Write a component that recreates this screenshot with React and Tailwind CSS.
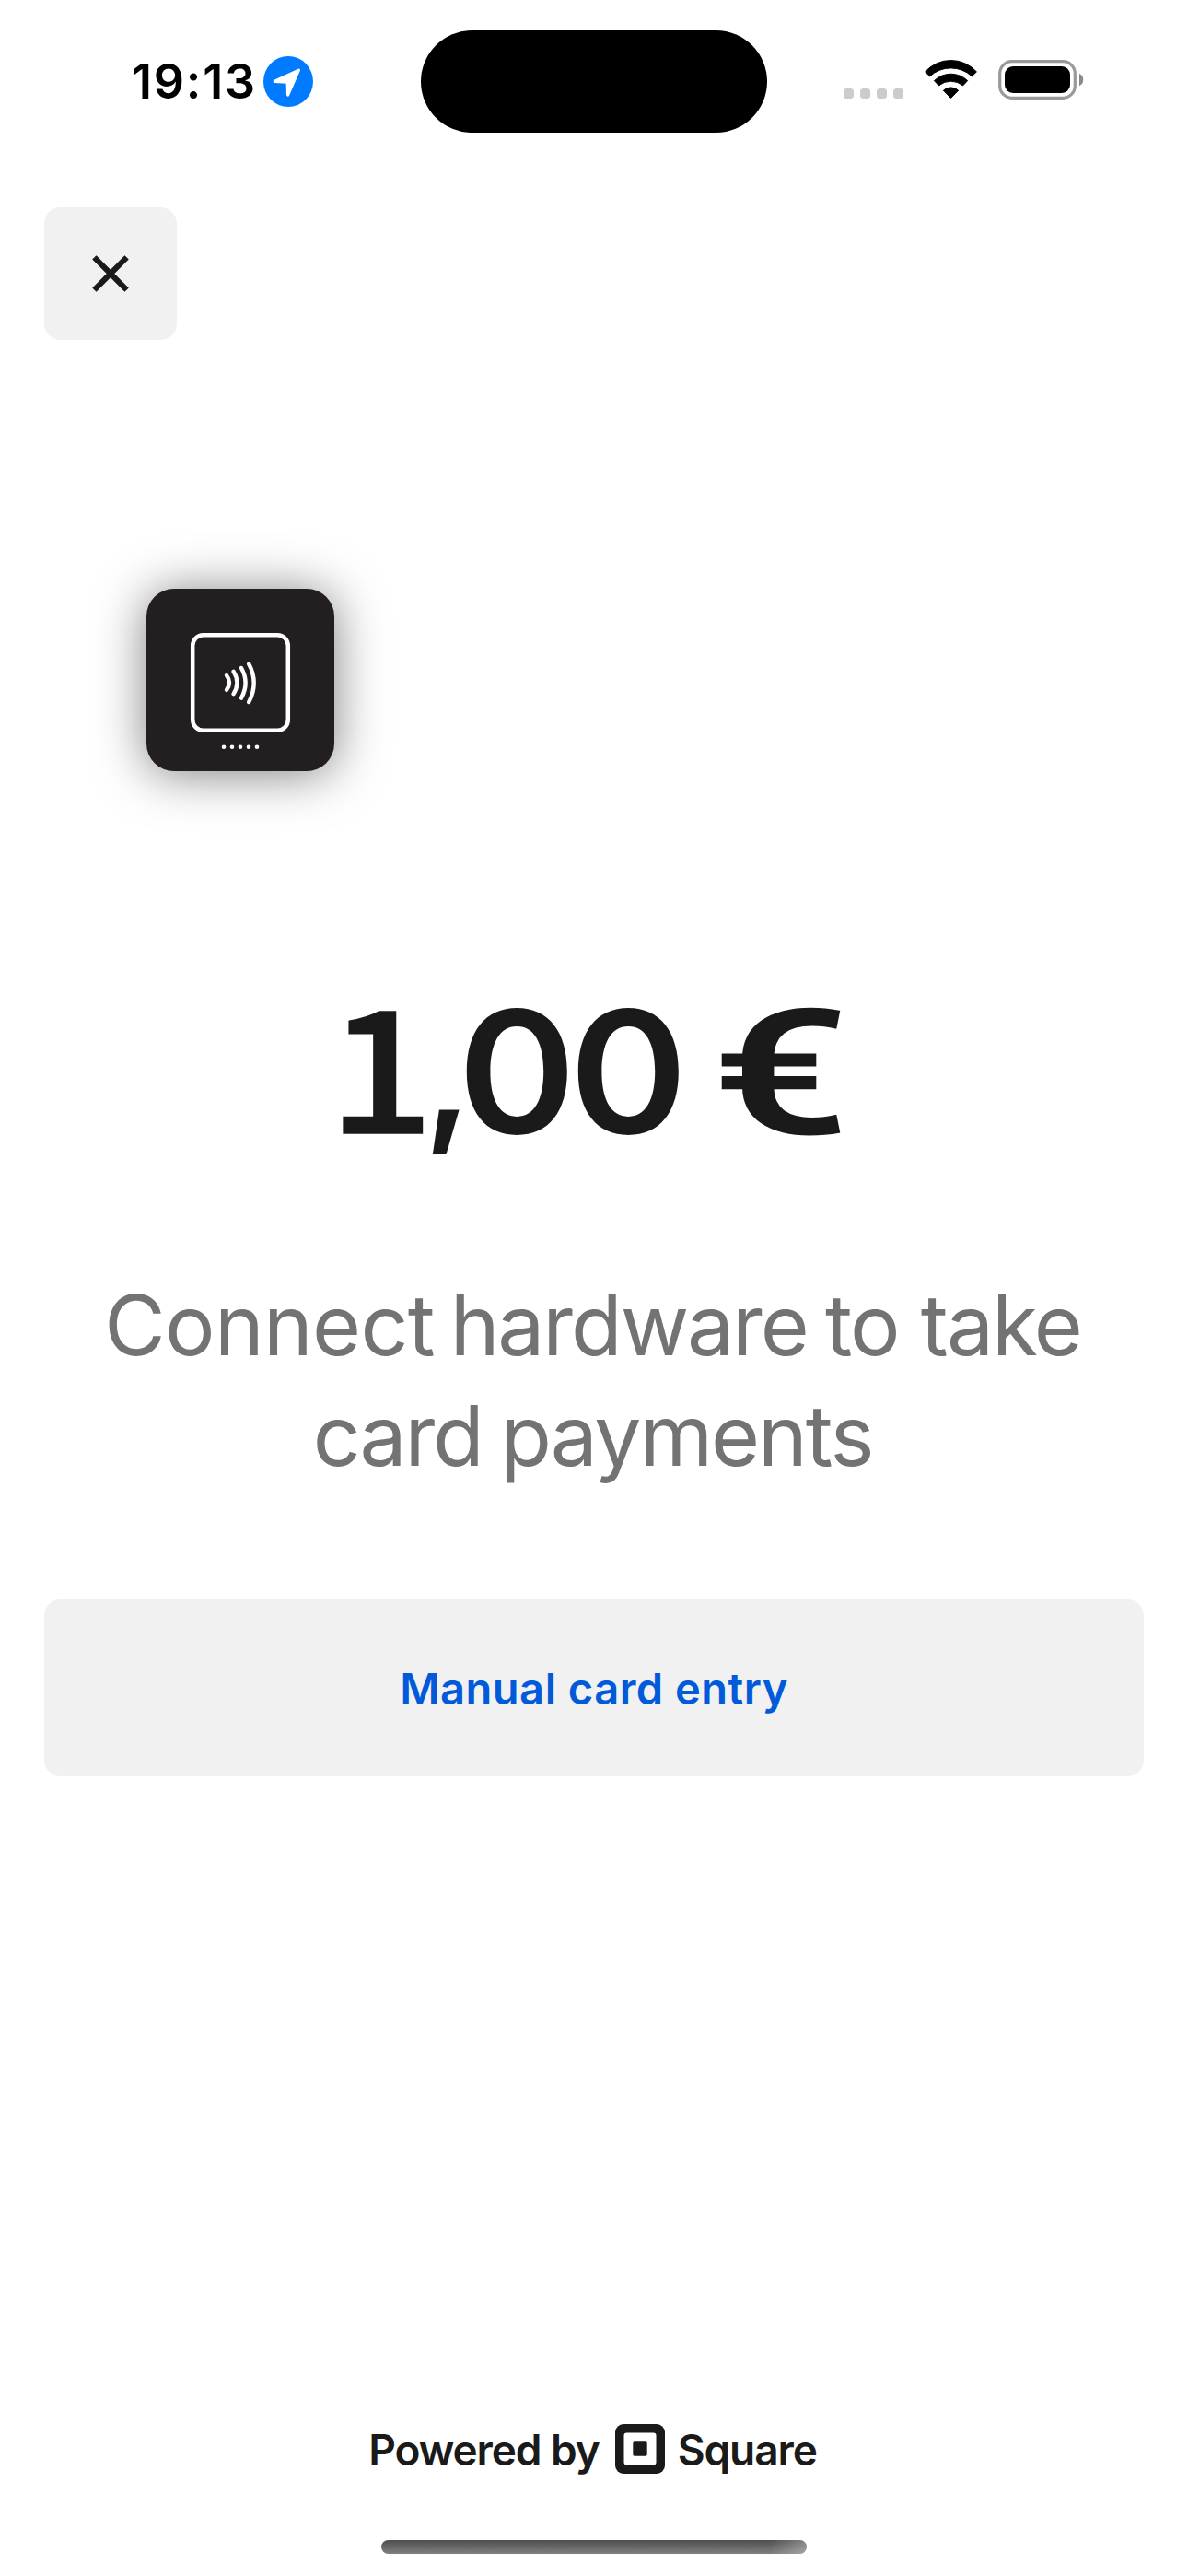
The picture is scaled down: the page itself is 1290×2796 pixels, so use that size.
import React from "react";

function LocationBadge() {
  return (
    <svg className="mt-[61px] ml-[6px] h-[55px] w-[54px] shrink-0" viewBox="0 0 54 55">
      <ellipse cx="27" cy="27.5" rx="27" ry="27.5" fill="#007aff" />
      <path
        d="M12.2 27.3 L38.4 15.2 L26.6 42 L26.2 28.2 Z"
        fill="#fff"
        stroke="#fff"
        strokeWidth="3.2"
        strokeLinejoin="round"
      />
    </svg>
  );
}

function SignalDots() {
  return (
    <div className="mt-[96px] ml-[83px] flex gap-[7px]">
      <span className="size-[11px] rounded-[3.5px] bg-[#cccccc]" />
      <span className="size-[11px] rounded-[3.5px] bg-[#cccccc]" />
      <span className="size-[11px] rounded-[3.5px] bg-[#cccccc]" />
      <span className="size-[11px] rounded-[3.5px] bg-[#cccccc]" />
    </div>
  );
}

function WifiIcon() {
  return (
    <svg className="mt-[65px] ml-[22px] h-[43px] w-[59px] shrink-0" viewBox="1003 65 59 43">
      <g stroke="#000" strokeWidth="1" strokeLinejoin="round">
        <path d="M1004.6 77.9 A37.6 37.6 0 0 1 1060.4 77.9 L1055.4 82.8 A33.9 33.9 0 0 0 1009.6 82.8 Z" />
        <path d="M1014.4 87.6 A25.9 25.9 0 0 1 1050.6 87.6 L1045.6 92.9 A20.6 20.6 0 0 0 1019.4 92.9 Z" />
        <path d="M1024.4 98.2 A11.6 11.6 0 0 1 1040.6 98.2 L1032.5 106.4 Z" />
      </g>
    </svg>
  );
}

function BatteryIcon() {
  return (
    <svg className="mt-[65px] ml-[22px] h-[43px] w-[94px] shrink-0" viewBox="0 0 94 43">
      <rect x="1.7" y="1.7" width="81.6" height="39.6" rx="13" fill="none" stroke="#999" strokeWidth="3.2" />
      <rect x="7" y="7" width="71" height="29" rx="9" />
      <path d="M88 14.8 A7.4 7.4 0 0 1 88 28.2 Z" fill="#8a8a8a" />
    </svg>
  );
}

function StatusBar() {
  return (
    <header className="flex h-[225px] items-start">
      <div className="flex w-[457px] items-start pl-[143px]">
        <span className="mt-[59px] w-[137px] text-[52px] leading-[60px] font-semibold tracking-[1.8px] whitespace-nowrap text-black">
          19:13
        </span>
        <LocationBadge />
      </div>
      <div className="mt-[33px] h-[111px] w-[376px] rounded-full bg-black" />
      <div className="flex flex-1 items-start">
        <SignalDots />
        <WifiIcon />
        <BatteryIcon />
      </div>
    </header>
  );
}

function CloseButton() {
  return (
    <button aria-label="Close" className="ml-[48px] flex size-[144px] items-center justify-center rounded-[18px] bg-[#f1f1f1]">
      <svg className="size-[40px]" viewBox="0 0 40 40" stroke="#1a1a1a" strokeWidth="6.2">
        <path d="M2.4 2.4 L37.6 37.6 M37.6 2.4 L2.4 37.6" />
      </svg>
    </button>
  );
}

function CardReader() {
  return (
    <div className="mt-[270px] ml-[159px] h-[198px] w-[204px] rounded-[30px] bg-[#231f20] shadow-[0_3px_54px_rgba(0,0,0,0.5)]">
      <svg className="h-[198px] w-[204px]" viewBox="159 639 204 198" fill="none" stroke="#fff">
        <rect x="209.2" y="689.2" width="103.6" height="103.6" rx="11.5" strokeWidth="4.5" />
        <g strokeWidth="4.4" strokeLinecap="round">
          <path d="M246 733 Q252 741 246 748.8" />
          <path d="M253.6 728.8 Q261.2 741 253.6 753.2" />
          <path d="M262 725 Q271.2 741 262 757.6" />
          <path d="M270.2 720.6 Q281.2 741 270.2 762" />
        </g>
        <g fill="#fff" stroke="none">
          <circle cx="243" cy="810.7" r="2.3" />
          <circle cx="252" cy="810.7" r="2.3" />
          <circle cx="261" cy="810.7" r="2.3" />
          <circle cx="270" cy="810.7" r="2.3" />
          <circle cx="279" cy="810.7" r="2.3" />
        </g>
      </svg>
    </div>
  );
}

function Amount() {
  return (
    <h1 className="mt-[223px] ml-[356px] flex h-[200px] items-baseline text-[184px] leading-[180px] font-semibold whitespace-nowrap text-[#1a1a1a]">
      <span className="w-[104px] origin-left scale-x-110 font-['Noto_Sans_CJK_SC',sans-serif] font-medium [-webkit-text-stroke:1.5px_#1a1a1a]">
        1
      </span>
      <span className="relative -top-[8px] w-[37px] text-[165px]">,</span>
      <span className="w-[276px] origin-left scale-x-106 tracking-[-7.2px]">00</span>
      <span className="w-[125px] origin-left scale-x-140 font-['Roboto',sans-serif] text-[188px] font-medium [-webkit-text-stroke:1.5px_#1a1a1a]">
        €
      </span>
    </h1>
  );
}

function Footer() {
  return (
    <footer className="mt-[703px] mr-[3px] flex h-[54px] items-center justify-center text-[46px] leading-[54px] font-semibold tracking-[-1.1px] text-[#1a1a1a]">
      <span className="relative top-px">Powered by</span>
      <svg className="mr-[14px] ml-[17px] size-[54px]" viewBox="0 0 54 54">
        <rect width="54" height="54" rx="9" fill="#1a1a1a" />
        <rect x="9.5" y="9.5" width="35" height="35" rx="3" fill="#fff" />
        <rect x="19.3" y="19.3" width="15.4" height="15.4" rx="1.6" fill="#1a1a1a" />
      </svg>
      <span className="relative top-px">Square</span>
    </footer>
  );
}

export default function App() {
  return (
    <main className="h-[2796px] w-[1290px] overflow-hidden bg-white font-['Inter',sans-serif]">
      <StatusBar />
      <CloseButton />
      <CardReader />
      <Amount />
      <p className="mt-[118px] pr-[3px] text-center text-[91px] leading-[120px] tracking-[-2.1px] [word-spacing:-4px] text-[#737373]">
        <span className="tracking-[-0.7px] [word-spacing:-8px]">Connect </span>
        hardware <span className="[word-spacing:1px]">to take</span>
        <br />
        card payments
      </p>
      <button className="mx-[48px] mt-[118px] flex h-[192px] w-[1194px] items-center justify-center rounded-[18px] bg-[#f1f1f1] pt-[2px] text-[47px] font-semibold tracking-[0.52px] text-[#005ad9]">
        Manual card entry
      </button>
      <Footer />
      <div className="mt-[72px] ml-[414px] h-[15px] w-[462px] overflow-hidden rounded-full bg-linear-to-b from-[#4e4e4e] to-[#808080]">
        <div className="ml-auto h-full w-[40px] bg-linear-to-r from-transparent to-white/30" />
      </div>
    </main>
  );
}
